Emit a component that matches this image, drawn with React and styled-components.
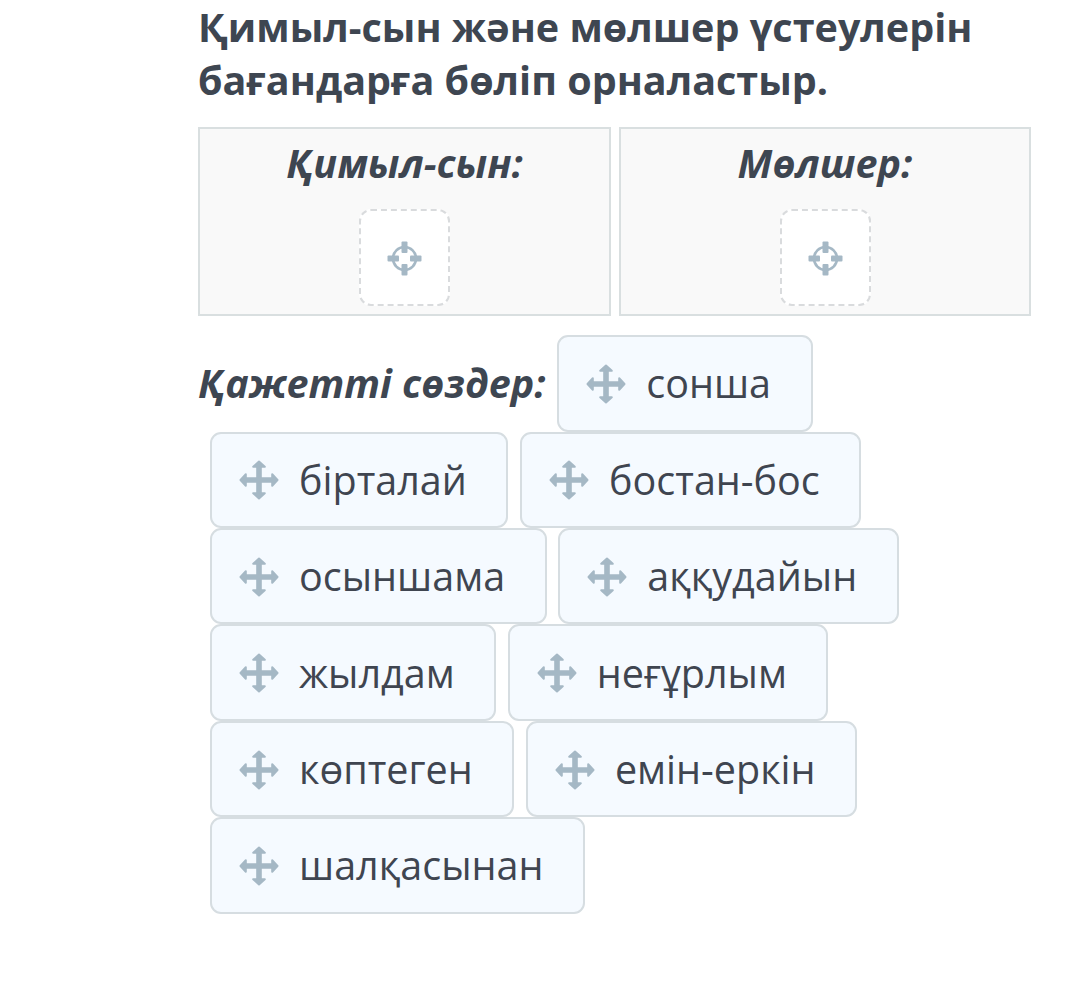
// ===== import base =====
import React from "react"
import styled, { createGlobalStyle } from "styled-components"

// ===== style =====
const GlobalStyle = createGlobalStyle`
    * {
        box-sizing : border-box;
    }
    body {
        margin : 0;
        background-color : #ffffff;
        color : #3f4550;
        font-family : "Open Sans", "Noto Sans", sans-serif;
        font-size : 39.53px;
        line-height : 53px;
    }
`
const Page = styled.main`
    width : 1080px;
    height : 988px;
    padding : 1px 49px 0 198px;
    overflow : hidden;
`
const Title = styled.h1`
    margin : 0;
    font-size : inherit;
    font-weight : 700;
    color : #3e4651;
`
const Columns = styled.div`
    display : grid;
    grid-template-columns : 413px 412px;
    gap : 8px;
    height : 189px;
    margin-top : 20px;
`
const Column = styled.section`
    display : flex;
    flex-direction : column;
    align-items : center;
    padding-top : 8px;
    border : 2px solid #d9dfe0;
    background-color : #f9f9f9;
`
const Label = styled.span`
    font-weight : 700;
    font-style : italic;
    color : #3e4651;
    white-space : nowrap;
`
const DropZone = styled.div`
    display : flex;
    align-items : center;
    justify-content : center;
    width : 91px;
    height : 97px;
    margin-top : 19px;
    padding-top : 1px;
    border : 2px dashed #d9dbdd;
    border-radius : 12px;
    background-color : #ffffff;
`
const WordBank = styled.div`
    margin-top : 19.3px;
`
const WordRow = styled.div`
    display : flex;
    align-items : center;
    height : 96.4px;
`
const Word = styled.div`
    display : flex;
    align-items : center;
    height : 100%;
    margin-left : 11.7px;
    padding : 0 39.5px 0 27px;
    border : 2px solid #d6dde1;
    border-radius : 11px;
    background-color : #f5faff;
    white-space : nowrap;

    &:first-child {
        margin-left : 12px;
    }
`
const MoveSvg = styled.svg`
    width : 40px;
    height : 40px;
    margin : 1px 20px 0 0;
    fill : #a5b8c5;
    stroke : #a5b8c5;
    stroke-width : 2;
    stroke-linejoin : round;
`
const WordText = styled.span`
    margin-top : 1px;
`

const rows = [
    ["бірталай", "бостан-бос"],
    ["осыншама", "аққудайын"],
    ["жылдам", "неғұрлым"],
    ["көптеген", "емін-еркін"],
    ["шалқасынан"],
]

//  ===== component =====
const MoveIcon = () => (
    <MoveSvg viewBox="0 0 40 40">
        <path d="M20 1.5 L25.8 6.8 H21.8 V18.2 H33.2 V14.2 L38.5 20 L33.2 25.8 V21.8 H21.8 V33.2 H25.8 L20 38.5 L14.2 33.2 H18.2 V21.8 H6.8 V25.8 L1.5 20 L6.8 14.2 V18.2 H18.2 V6.8 H14.2 Z"/>
    </MoveSvg>
)

const TargetIcon = () => (
    <svg width="35" height="35" viewBox="0 0 35 35">
        <circle cx="17.5" cy="17.5" r="11.5" fill="none" stroke="#a5b8c5" strokeWidth="2.6"/>
        <g fill="#a5b8c5">
            <rect x="14.5" y="0.5" width="6" height="11.5" rx="1"/>
            <rect x="14.5" y="23" width="6" height="11.5" rx="1"/>
            <rect x="0.5" y="14.5" width="11.5" height="6" rx="1"/>
            <rect x="23" y="14.5" width="11.5" height="6" rx="1"/>
        </g>
    </svg>
)

const Group = ({ title }) => (
    <Column>
        <Label>{title}</Label>
        <DropZone>
            <TargetIcon/>
        </DropZone>
    </Column>
)

const DragWord = ({ text }) => (
    <Word>
        <MoveIcon/>
        <WordText>{text}</WordText>
    </Word>
)

const App = () => {
    return(
        <React.Fragment>
            <GlobalStyle/>
            <Page>
                <Title>
                    Қимыл-сын және мөлшер үстеулерін<br/>
                    бағандарға бөліп орналастыр.
                </Title>
                <Columns>
                    <Group title="Қимыл-сын:"/>
                    <Group title="Мөлшер:"/>
                </Columns>
                <WordBank>
                    <WordRow>
                        <Label>Қажетті сөздер:</Label>
                        <DragWord text="сонша"/>
                    </WordRow>
                    {rows.map((words) => (
                        <WordRow key={words[0]}>
                            {words.map((word) => <DragWord key={word} text={word}/>)}
                        </WordRow>
                    ))}
                </WordBank>
            </Page>
        </React.Fragment>
    )
}

export default App
